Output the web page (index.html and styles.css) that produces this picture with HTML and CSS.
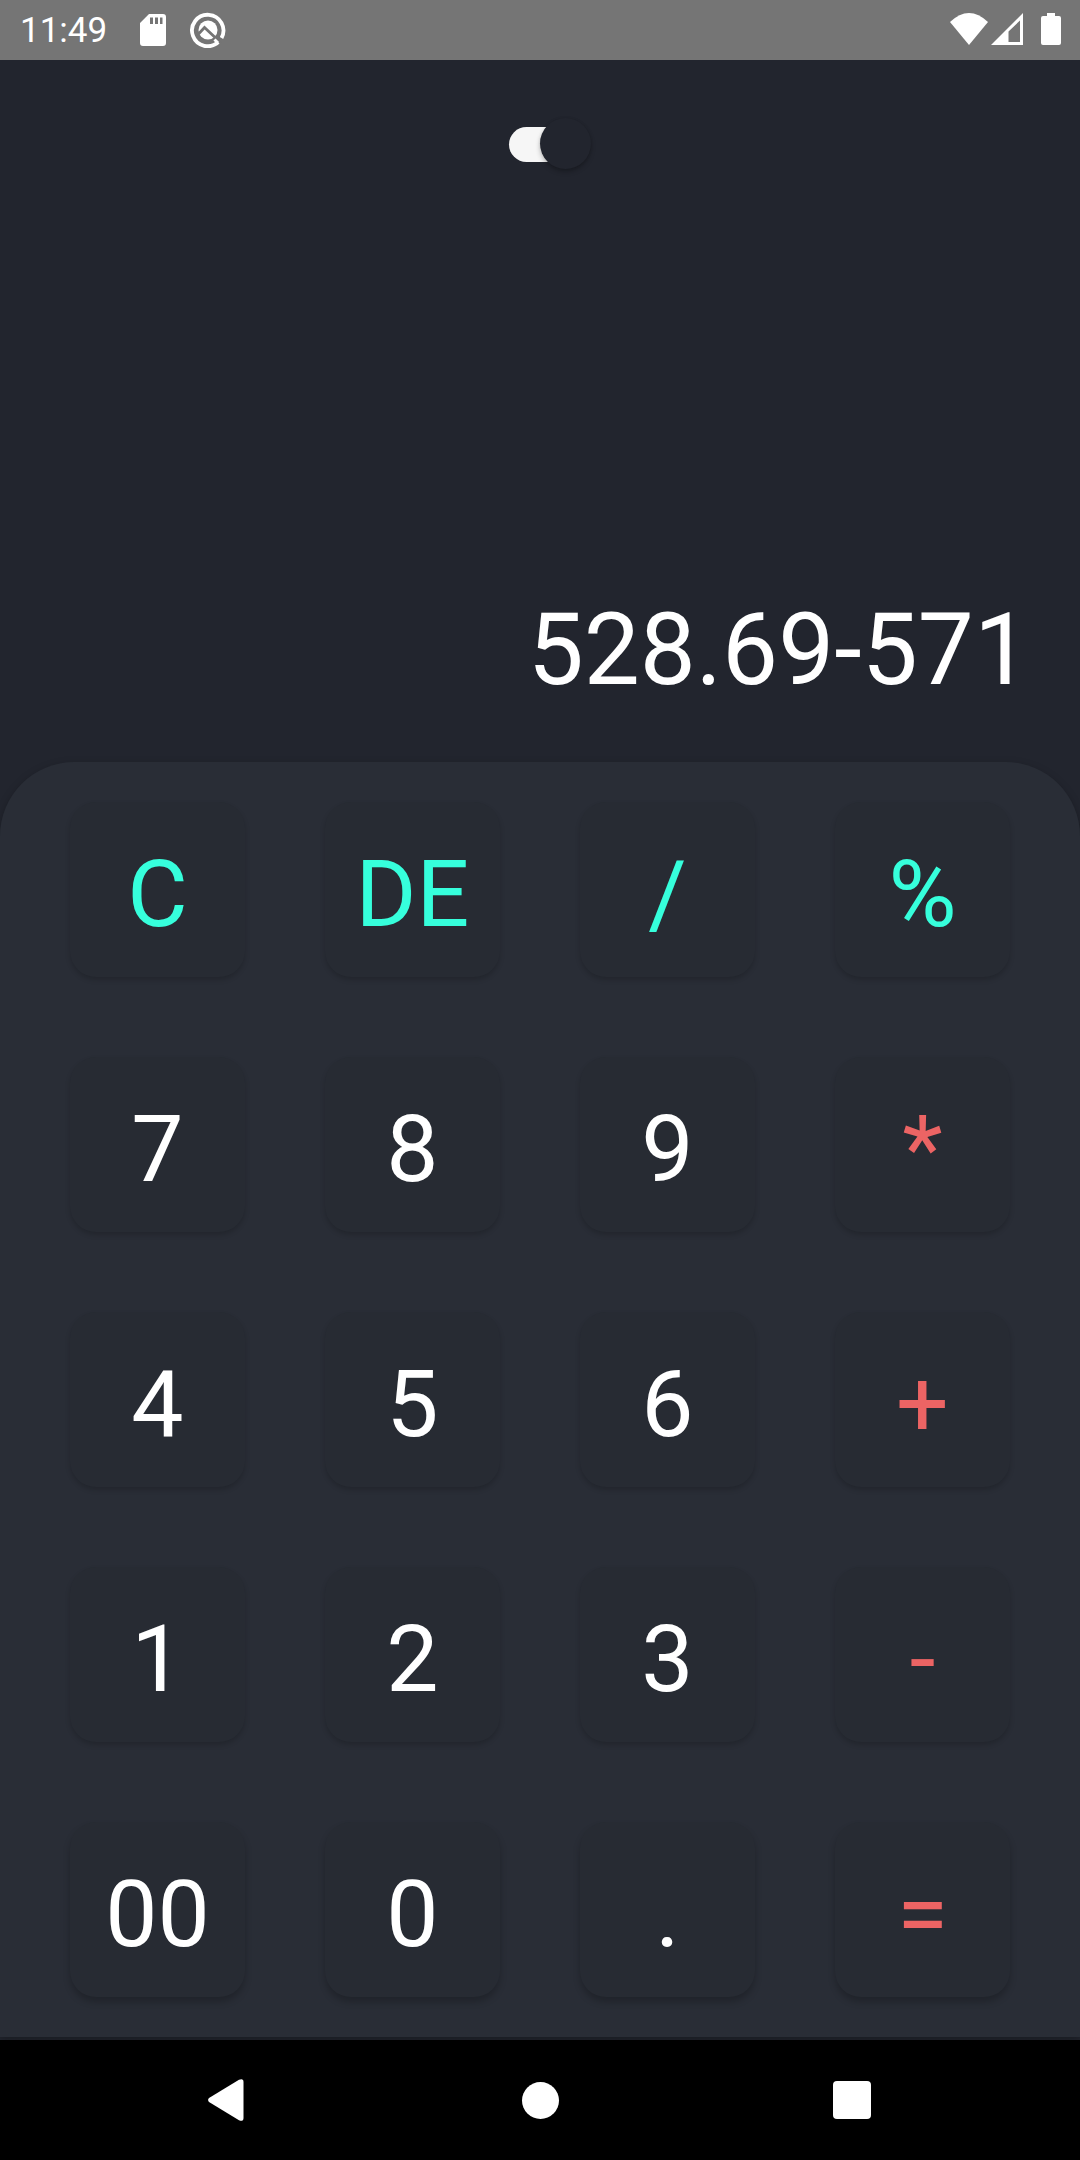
FILE: index.html
```html
<!DOCTYPE html>
<html lang="en">
<head>
<meta charset="utf-8">
<title>Calculator</title>
<link rel="stylesheet" href="styles.css">
</head>
<body>
<div class="screen">
  <header class="status">
    <span class="clock">11:49</span>
    <svg class="sd" viewBox="0 0 26 32"><path fill="#fff" fill-rule="evenodd" d="M9 0H23Q26 0 26 3V29Q26 32 23 32H3Q0 32 0 29V9ZM10 3.500V10H13V3.500ZM15 3.500V10H18V3.500ZM20 3.500V10H22.500V3.500Z"/></svg>
    <svg class="debug" viewBox="0 0 36 36"><path d="M28.700 29.700A15.700 15.700 0 1 1 31.500 26" fill="none" stroke="#fff" stroke-width="3.800"/><circle cx="18" cy="18" r="9.500" fill="#fff"/><path d="M8 22.500L14.500 15.500L31 31" fill="none" stroke="#757575" stroke-width="2.800"/><path d="M24.500 27.500L28 31" stroke="#fff" stroke-width="3"/></svg>
    <span class="spacer"></span>
    <svg class="wifi" viewBox="0 0 38 32"><path fill="#fff" d="M0 9Q19-9 38 9L19 32Z"/></svg>
    <svg class="signal" viewBox="0 0 32 32"><path fill="#fff" fill-rule="evenodd" d="M0 32L32 0V32ZM17.500 18.500V29H29V7.500Z"/></svg>
    <svg class="battery" viewBox="0 0 20 32"><path fill="#fff" d="M6 0H14V3H18Q20 3 20 5V30Q20 32 18 32H2Q0 32 0 30V5Q0 3 2 3H6Z"/></svg>
  </header>
  <main class="app">
    <div class="switch"><span class="thumb"></span></div>
    <div class="display">528.69-571</div>
    <section class="keypad">
      <button class="key teal">C</button><button class="key teal">DE</button><button class="key teal">/</button><button class="key teal">%</button>
      <button class="key">7</button><button class="key">8</button><button class="key">9</button><button class="key red">*</button>
      <button class="key">4</button><button class="key">5</button><button class="key">6</button><button class="key red">+</button>
      <button class="key">1</button><button class="key">2</button><button class="key">3</button><button class="key red">-</button>
      <button class="key low">00</button><button class="key low">0</button><button class="key low">.</button><button class="key red low">=</button>
    </section>
  </main>
  <nav class="nav">
    <svg class="back" viewBox="0 0 36 42"><path fill="#fff" d="M1 19L31 .7Q35.500-1 35.500 3V39Q35.500 43 31 41.300L1 23Q-.8 21 1 19Z"/></svg>
    <span class="home"></span>
    <span class="recent"></span>
  </nav>
</div>
</body>
</html>
```

FILE: styles.css
```css
* { box-sizing: border-box; }
body { margin: 0; background: #22252e; font-family: Roboto, "Liberation Sans", sans-serif; }
.screen { width: 1080px; height: 2160px; display: flex; flex-direction: column; overflow: hidden; }

.status { height: 60px; background: #757575; display: flex; align-items: flex-start; padding: 0 20px; color: #fff; }
.clock { width: 120px; font-size: 35px; line-height: 62px; }
.status svg { display: block; flex: none; }
.sd { width: 26px; height: 32px; margin-top: 14px; }
.debug { width: 36px; height: 36px; margin: 12px 0 0 24px; }
.spacer { flex: 1; }
.wifi { width: 38px; height: 32px; margin-top: 13px; }
.signal { width: 32px; height: 32px; margin: 13px 0 0 3px; }
.battery { width: 20px; height: 32px; margin: 13px -1px 0 18px; }

.app { height: 1980px; display: flex; flex-direction: column; background: #22252e; }
.switch { width: 82px; height: 35px; flex: none; margin: 67px 0 0 509px; display: flex; align-items: center; background: linear-gradient(90deg, #f6f6f6 0 50px, transparent 50px); border-radius: 18px; }
.thumb { width: 51px; height: 51px; flex: none; margin: -2px 0 0 31px; border-radius: 50%; background: #22252e; box-shadow: 0 3px 5px rgba(0,0,0,.24), 0 0 3px rgba(0,0,0,.1); }
.display { flex: 1; display: flex; align-items: flex-end; justify-content: flex-end; padding: 0 50px 54px 0; color: #fff; font-size: 99.75px; line-height: 117px; }

.keypad { height: 1275px; flex: none; display: grid; grid-template-columns: repeat(4, 175px); grid-auto-rows: 175px; gap: 80px; padding: 40px 70px; background: #292d36; border-radius: 74px 74px 0 0; box-shadow: 0 3px 8px rgba(0,0,0,.25); margin-bottom: 3px; }
.key { margin: 0; padding: 10px 0 0; border: 0; border-radius: 26px; background: #272b33; color: #fff; font: 400 93px/165px Roboto, "Liberation Sans", sans-serif; text-align: center; box-shadow: 0 3px 5px rgba(0,0,0,.17); }
.low { box-shadow: 0 5px 7px rgba(0,0,0,.22); }
.teal { color: #36ffdc; }
.red { color: #ec6464; }

.nav { height: 120px; flex: none; background: #000; display: flex; align-items: center; justify-content: space-between; padding: 0 209px 0 208px; position: relative; }
.back { width: 36px; height: 42px; }
.home { width: 37px; height: 37px; margin-left: 3px; border-radius: 50%; background: #fff; }
.recent { width: 38px; height: 38px; border-radius: 4px; background: #fff; }
```
